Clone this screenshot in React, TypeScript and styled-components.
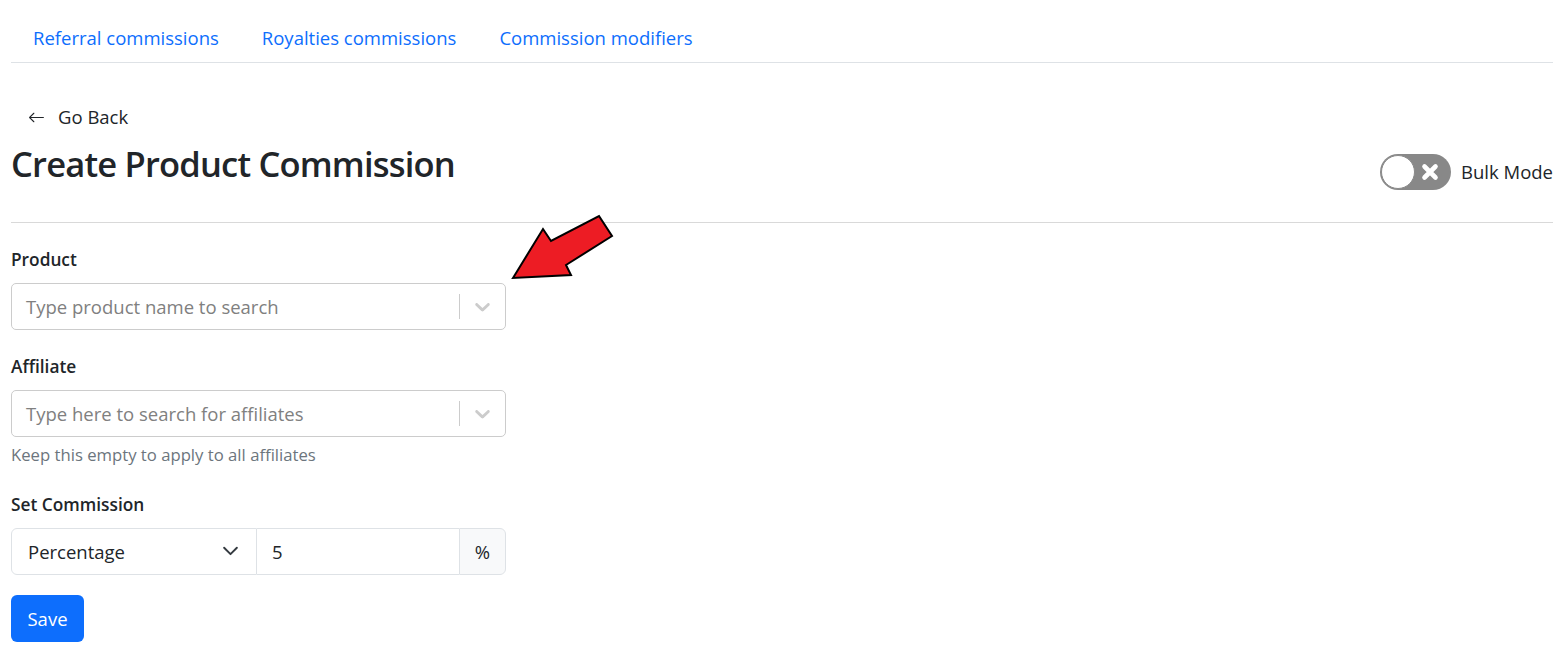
import React from "react";
import styled, { createGlobalStyle } from "styled-components";

const GlobalStyle = createGlobalStyle`
  * { box-sizing: border-box; }
  body {
    margin: 0;
    background: #ffffff;
    color: #212529;
    font-family: "Open Sans", "Noto Sans", "Liberation Sans", sans-serif;
    font-size: 18.5px;
    line-height: 1.5;
  }
`;

const Page = styled.div`
  position: relative;
  padding: 12px 11px 0 11px;
  min-height: 652px;
`;

const Tabs = styled.nav`
  display: flex;
  border-bottom: 1px solid #dee2e6;
`;

const TabLink = styled.a`
  display: block;
  padding: 11px 21px 9px 22px;
  color: #0d6efd;
  text-decoration: none;
  line-height: 30px;
`;

const BackButton = styled.button`
  display: flex;
  align-items: center;
  gap: 13px;
  margin-top: 32px;
  padding: 7px 15px 8px 17px;
  background: transparent;
  border: none;
  color: #212529;
  font: inherit;
  line-height: 30px;
`;

const HeaderRow = styled.div`
  display: flex;
  justify-content: space-between;
  align-items: flex-start;
  padding-bottom: 32px;
  border-bottom: 1px solid #d9d9d9;
`;

const Title = styled.h2`
  margin: 0;
  font-size: 34.5px;
  line-height: 48px;
  font-weight: 600;
  letter-spacing: -0.8px;
  color: #212529;
`;

const BulkToggle = styled.label`
  display: flex;
  align-items: center;
  gap: 10px;
  margin-top: 14px;
  line-height: 30px;
`;

const Track = styled.span`
  position: relative;
  display: flex;
  align-items: center;
  justify-content: flex-end;
  width: 71px;
  height: 36px;
  border-radius: 18px;
  background: #888888;
  padding-right: 11px;
`;

const Knob = styled.span`
  position: absolute;
  left: 1px;
  top: 1px;
  width: 34px;
  height: 34px;
  border-radius: 50%;
  background: #ffffff;
  border: 1px solid #8a8a8a;
`;

const Form = styled.form`
  width: 495px;
  padding-top: 21px;
`;

const Group = styled.div<{ $gap?: number }>`
  margin-bottom: ${(p) => (p.$gap ?? 21)}px;
`;

const Label = styled.label`
  display: block;
  padding-top: 1px;
  font-size: 17.3px;
  font-weight: 600;
  line-height: 30px;
  margin-bottom: 8px;
`;

const SelectControl = styled.div`
  display: flex;
  align-items: center;
  height: 47px;
  border: 1px solid #cccccc;
  border-radius: 5px;
  background: #fff;
`;

const Placeholder = styled.div`
  flex: 1;
  padding-left: 14px;
  color: #808080;
  white-space: nowrap;
`;

const Separator = styled.span`
  width: 1px;
  align-self: stretch;
  margin: 10px 0;
  background: #cccccc;
`;

const Indicator = styled.span`
  display: flex;
  padding: 10px;
  color: #cccccc;
`;

const HelpText = styled.div`
  margin-top: 5px;
  font-size: 16.7px;
  line-height: 26px;
  color: #6c757d;
`;

const InputGroup = styled.div`
  display: flex;
  height: 47px;
`;

const TypeSelect = styled.div`
  display: flex;
  align-items: center;
  justify-content: space-between;
  width: 246px;
  padding: 0 17px 0 16px;
  border: 1px solid #dee2e6;
  border-radius: 6px 0 0 6px;
  color: #212529;
`;

const NumberInput = styled.div`
  flex: 1;
  display: flex;
  align-items: center;
  padding-left: 15px;
  border-top: 1px solid #dee2e6;
  border-bottom: 1px solid #dee2e6;
`;

const Addon = styled.div`
  width: 47px;
  display: flex;
  align-items: center;
  justify-content: center;
  background: #f8f9fa;
  border: 1px solid #dee2e6;
  border-radius: 0 6px 6px 0;
`;

const SaveButton = styled.button`
  height: 47px;
  width: 73px;
  padding: 0;
  border: none;
  border-radius: 6px;
  background: #0d6efd;
  color: #fff;
  font: inherit;
  line-height: 30px;
`;

const Annotation = styled.svg`
  position: absolute;
  left: 500px;
  top: 205px;
`;

const Chevron = () => (
  <svg width="25" height="25" viewBox="0 0 20 20" fill="currentColor">
    <path d="M4.516 7.548c0.436-0.446 1.043-0.481 1.576 0l3.908 3.747 3.908-3.747c0.533-0.481 1.141-0.446 1.574 0 0.436 0.445 0.408 1.197 0 1.615-0.406 0.418-4.695 4.502-4.695 4.502-0.217 0.223-0.502 0.335-0.787 0.335s-0.57-0.112-0.789-0.335c0 0-4.287-4.084-4.695-4.502s-0.436-1.17 0-1.615z" />
  </svg>
);

const SearchSelect = ({ placeholder }: { placeholder: string }) => (
  <SelectControl>
    <Placeholder>{placeholder}</Placeholder>
    <Separator />
    <Indicator>
      <Chevron />
    </Indicator>
  </SelectControl>
);

export default function App() {
  return (
    <>
      <GlobalStyle />
      <Page>
        <Tabs>
          <TabLink href="#">Referral commissions</TabLink>
          <TabLink href="#">Royalties commissions</TabLink>
          <TabLink href="#">Commission modifiers</TabLink>
        </Tabs>

        <BackButton type="button">
          <svg width="17" height="17" viewBox="0 0 16 16" fill="#212529">
            <path d="M15 8a.5.5 0 0 0-.5-.5H2.707l3.147-3.146a.5.5 0 1 0-.708-.708l-4 4a.5.5 0 0 0 0 .708l4 4a.5.5 0 0 0 .708-.708L2.707 8.5H14.5A.5.5 0 0 0 15 8" />
          </svg>
          Go Back
        </BackButton>

        <HeaderRow>
          <Title>Create Product Commission</Title>
          <BulkToggle>
            <Track>
              <Knob />
              <svg width="20" height="20" viewBox="0 0 20 20">
                <path d="M4.5 4.5 L15.5 15.5 M15.5 4.5 L4.5 15.5" stroke="#fff" strokeWidth="4.6" strokeLinecap="round" />
              </svg>
            </Track>
            Bulk Mode
          </BulkToggle>
        </HeaderRow>

        <Form>
          <Group>
            <Label>Product</Label>
            <SearchSelect placeholder="Type product name to search" />
          </Group>
          <Group>
            <Label>Affiliate</Label>
            <SearchSelect placeholder="Type here to search for affiliates" />
            <HelpText>Keep this empty to apply to all affiliates</HelpText>
          </Group>
          <Group $gap={20}>
            <Label>Set Commission</Label>
            <InputGroup>
              <TypeSelect>
                Percentage
                <svg width="17" height="13" viewBox="0 0 16 12">
                  <path d="m2 2.5 6 6 6-6" fill="none" stroke="#343a40" strokeWidth="1.8" strokeLinecap="round" strokeLinejoin="round" />
                </svg>
              </TypeSelect>
              <NumberInput>5</NumberInput>
              <Addon>%</Addon>
            </InputGroup>
          </Group>
          <SaveButton type="button">Save</SaveButton>
        </Form>

        <Annotation width="120" height="85" viewBox="0 0 120 85">
          <polygon
            points="13,73 43,24 51,36 99,11 112,31 66,60 71,70"
            fill="#ed1c24"
            stroke="#000"
            strokeWidth="2"
            strokeLinejoin="miter"
          />
        </Annotation>
      </Page>
    </>
  );
}
